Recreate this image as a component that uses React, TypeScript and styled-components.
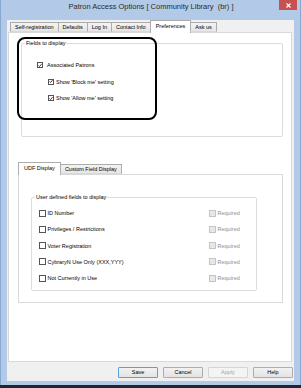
import React from "react";
import styled, { createGlobalStyle } from "styled-components";

const GlobalStyle = createGlobalStyle`
  html, body {
    margin: 0;
    padding: 0;
    background: #1f2630;
  }
  body {
    font-family: "Liberation Sans", Arial, sans-serif;
    color: #000;
  }
  * {
    box-sizing: border-box;
  }
`;

const Window = styled.div`
	width: 301px;
	height: 385px;
	background: #b2cae7;
	border-left: 1px solid #87a7cf;
	border-right: 1px solid #87a7cf;
	display: flex;
	flex-direction: column;
`;

const TitleBar = styled.div`
	height: 20px;
	flex-shrink: 0;
	display: flex;
	align-items: flex-start;
`;

const Title = styled.div`
	flex: 1;
	padding-left: 22px;
	text-align: center;
	font-size: 7.5px;
	line-height: 14px;
	color: #2a2a2a;
	white-space: pre;
`;

const CloseButton = styled.div`
	width: 18px;
	height: 10px;
	margin-right: 3px;
	background: #c75050;
	display: flex;
	align-items: center;
	justify-content: center;
`;

const Client = styled.div`
	flex: 1;
	min-height: 0;
	margin: 0 6px 4px 6px;
	background: #f0f0f0;
	display: flex;
	flex-direction: column;
`;

const TabControl = styled.div<{ $ml: number; $mr: number; $mt?: number; $mb?: number; $fill?: boolean }>`
	display: flex;
	flex-direction: column;
	margin: ${(p) => p.$mt || 0}px ${(p) => p.$mr}px ${(p) => p.$mb || 0}px ${(p) => p.$ml}px;
	${(p) => (p.$fill ? "flex: 1; min-height: 0;" : "")}
`;

const TabStrip = styled.div<{ $indent: number }>`
	height: 12px;
	flex-shrink: 0;
	display: flex;
	align-items: flex-end;
	padding-left: ${(p) => p.$indent}px;
	position: relative;
	z-index: 1;
`;

const Tab = styled.div<{ $active?: boolean }>`
	height: ${(p) => (p.$active ? 13 : 10)}px;
	margin-bottom: ${(p) => (p.$active ? -1 : 0)}px;
	padding: 0 ${(p) => (p.$active ? 5 : 4)}px;
	border: 1px solid #acacac;
	border-bottom: ${(p) => (p.$active ? "none" : "1px solid #d9d9d9")};
	background: ${(p) => (p.$active ? "#ffffff" : "linear-gradient(#f3f3f3, #e6e6e6)")};
	font-size: 5.5px;
	line-height: ${(p) => (p.$active ? 10 : 8)}px;
	white-space: nowrap;
	& + & {
		margin-left: -1px;
	}
`;

const Panel = styled.div<{ $fill?: boolean }>`
	background: #ffffff;
	border: 1px solid #d9d9d9;
	display: flex;
	flex-direction: column;
	position: relative;
	${(p) => (p.$fill ? "flex: 1; min-height: 0;" : "")}
`;

const Group = styled.fieldset<{ $m: string }>`
	margin: ${(p) => p.$m};
	padding: 0;
	min-width: 0;
	border: 1px solid #dcdcdc;
	border-radius: 2px;
`;

const Legend = styled.legend`
	margin-left: 3px;
	padding: 0 1px;
	font-size: 5.5px;
	line-height: 7px;
`;

const GroupBody = styled.div<{ $pad: string; $gap: number }>`
	padding: ${(p) => p.$pad};
	display: flex;
	flex-direction: column;
	gap: ${(p) => p.$gap}px;
`;

const CheckRow = styled.div<{ $indent: number; $gap: number }>`
	height: 10px;
	display: flex;
	align-items: center;
	gap: ${(p) => p.$gap}px;
	padding-left: ${(p) => p.$indent}px;
	font-size: 5.5px;
	white-space: nowrap;
`;

const FieldRow = styled.div`
	height: 10px;
	display: flex;
	align-items: center;
	padding: 0 13px 0 7px;
	font-size: 5.5px;
	white-space: nowrap;
`;

const FieldName = styled.div`
	flex: 1;
	display: flex;
	align-items: center;
	gap: 1.5px;
`;

const Required = styled.div`
	width: 34px;
	display: flex;
	align-items: center;
	gap: 1.5px;
	color: #8c8c8c;
`;

const Box = styled.span<{ $size: number; $disabled?: boolean }>`
	width: ${(p) => p.$size}px;
	height: ${(p) => p.$size}px;
	flex-shrink: 0;
	border: 1px solid ${(p) => (p.$disabled ? "#c4c4c4" : "#555555")};
	background: ${(p) => (p.$disabled ? "#e8e8e8" : "#ffffff")};
	display: flex;
	align-items: center;
	justify-content: center;
`;

const Highlight = styled.div`
	position: absolute;
	left: 8px;
	top: 4px;
	width: 140px;
	height: 83px;
	border: 2.5px solid #000;
	border-radius: 8px;
	pointer-events: none;
`;

const Footer = styled.div`
	height: 19px;
	flex-shrink: 0;
	padding: 5px 1px 0 0;
	display: flex;
	justify-content: flex-end;
	align-items: flex-start;
	gap: 5px;
`;

const Button = styled.button<{ $default?: boolean }>`
	width: 40px;
	height: 11px;
	padding: 0;
	font-family: inherit;
	font-size: 5.5px;
	line-height: 9px;
	color: #000;
	border: 1px solid ${(p) => (p.$default ? "#5b9fdc" : "#adadad")};
	border-radius: 1px;
	background: linear-gradient(#f2f2f2, #e3e3e3);

	&:disabled {
		color: #a3a3a3;
		border-color: #d5d5d5;
		background: #f4f4f4;
	}
`;

const Check = () => (
	<svg width='5' height='5' viewBox='0 0 5 5'>
		<path d='M0.6 2.6 L1.9 3.9 L4.4 0.8' fill='none' stroke='#222' strokeWidth='1.1' />
	</svg>
);

const CheckBox = ({ checked, size = 6, disabled }: { checked?: boolean; size?: number; disabled?: boolean }) => (
	<Box $size={size} $disabled={disabled}>
		{checked && <Check />}
	</Box>
);

const topTabs = ["Self-registration", "Defaults", "Log In", "Contact Info", "Preferences", "Ask us"];

const udfFields = [
	"ID Number",
	"Privileges / Restrictions",
	"Voter Registration",
	"CybraryN Use Only (XXX,YYY)",
	"Not Currently in Use",
];

const App = () => {
	return (
		<>
			<GlobalStyle />
			<Window>
				<TitleBar>
					<Title>Patron Access Options [ Community Library  (br) ]</Title>
					<CloseButton>
						<svg width='5' height='5' viewBox='0 0 5 5'>
							<path d='M0.5 0.5 L4.5 4.5 M4.5 0.5 L0.5 4.5' stroke='#fff' strokeWidth='1.1' />
						</svg>
					</CloseButton>
				</TitleBar>
				<Client>
					<TabControl $ml={1} $mr={2} $fill>
						<TabStrip $indent={2}>
							{topTabs.map((t) => (
								<Tab key={t} $active={t === "Preferences"}>
									{t}
								</Tab>
							))}
						</TabStrip>
						<Panel $fill>
							<Group $m='7px 8px 0 12px'>
								<Legend>Fields to display</Legend>
								<GroupBody $pad='13px 0 33px 0' $gap={6.5}>
									<CheckRow $indent={15} $gap={4}>
										<CheckBox checked />
										Associated Patrons
									</CheckRow>
									<CheckRow $indent={26} $gap={2}>
										<CheckBox checked />
										Show 'Block me' setting
									</CheckRow>
									<CheckRow $indent={26} $gap={2}>
										<CheckBox checked />
										Show 'Allow me' setting
									</CheckRow>
								</GroupBody>
							</Group>

							<TabControl $ml={9} $mr={8} $mt={25}>
								<TabStrip $indent={0}>
									<Tab $active>UDF Display</Tab>
									<Tab>Custom Field Display</Tab>
								</TabStrip>
								<Panel>
									<Group $m='18.5px 25px 11px 12px'>
										<Legend>User defined fields to display</Legend>
										<GroupBody $pad='7.5px 0 7px 0' $gap={6.25}>
											{udfFields.map((f) => (
												<FieldRow key={f}>
													<FieldName>
														<CheckBox size={7} />
														{f}
													</FieldName>
													<Required>
														<CheckBox size={7} disabled />
														Required
													</Required>
												</FieldRow>
											))}
										</GroupBody>
									</Group>
								</Panel>
							</TabControl>

							<Highlight />
						</Panel>
					</TabControl>
					<Footer>
						<Button $default>Save</Button>
						<Button>Cancel</Button>
						<Button disabled>Apply</Button>
						<Button>Help</Button>
					</Footer>
				</Client>
			</Window>
		</>
	);
};

export default App;
